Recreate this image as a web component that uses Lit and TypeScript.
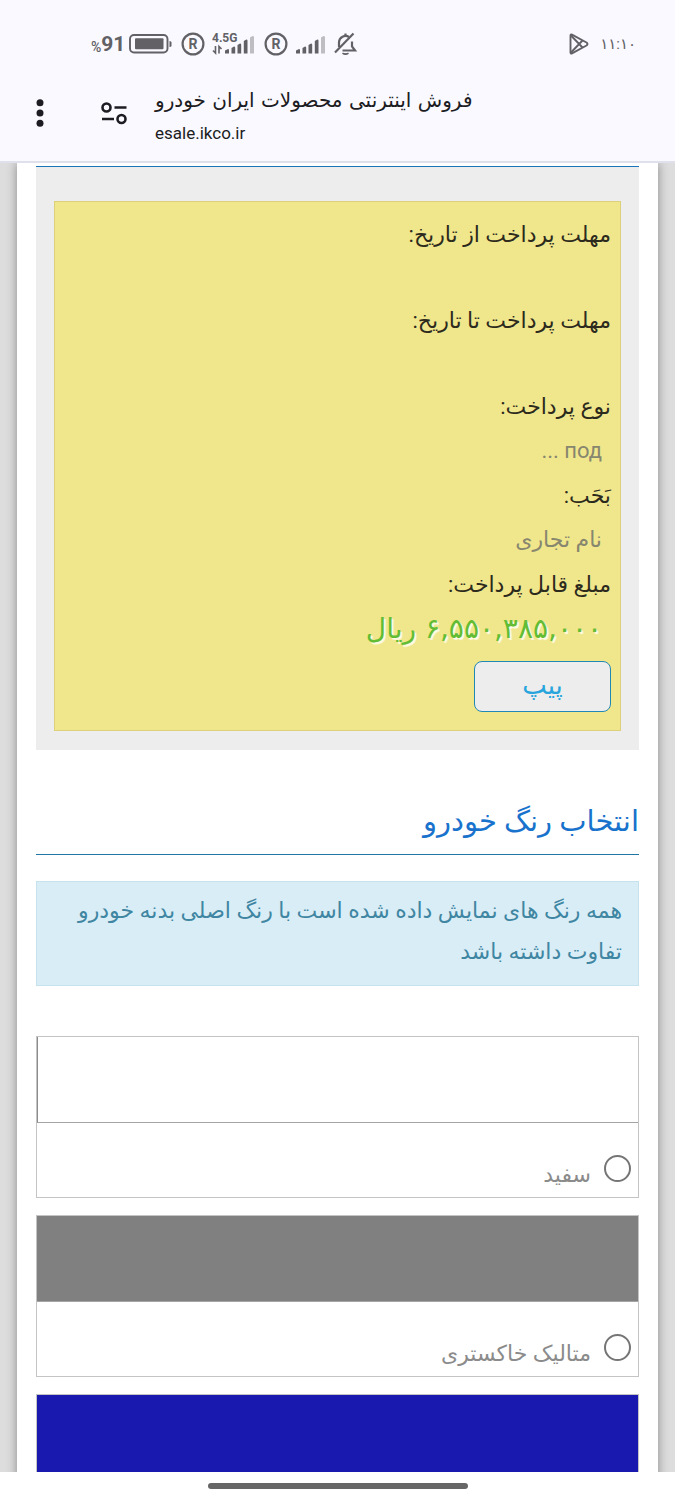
import { LitElement, html, svg, css, nothing } from "lit";
import { customElement, property } from "lit/decorators.js";

interface Field {
  label: string;
  value: string;
  price?: boolean;
}

interface Paint {
  id: string;
  name?: string;
  tone: string;
}

const FIELDS: Field[] = [
  { label: "مهلت پرداخت از تاریخ:", value: "" },
  { label: "مهلت پرداخت تا تاریخ:", value: "" },
  { label: "نوع پرداخت:", value: "под ..." },
  { label: "بَحَب:", value: "نام تجاری" },
  { label: "مبلغ قابل پرداخت:", value: "۶,۵۵۰,۳۸۵,۰۰۰ ریال", price: true },
];

const PAINTS: Paint[] = [
  { id: "white", name: "سفید", tone: "#ffffff" },
  { id: "grey", name: "متالیک خاکستری", tone: "#808080" },
  { id: "blue", tone: "#1919b0" },
];

@customElement("status-bar")
class StatusBar extends LitElement {
  static styles = css`
    :host {
      display: flex;
      align-items: center;
      height: 32px;
      padding: 28px 39px 0 91px;
      color: #616166;
      direction: ltr;
    }
    .percent {
      font: 500 14px/32px Roboto, sans-serif;
      padding-top: 6px;
    }
    .level {
      font: 700 21px/32px "Roboto", sans-serif;
    }
    .battery { margin: 0 9px 0 4px; }
    .reg { margin-right: 7px; }
    .net { margin-right: 9px; }
    .bars { margin: 0 8px 0 1px; }
    .play { margin-left: auto; }
    .time {
      font: 15px/32px Roboto, "DejaVu Sans", sans-serif;
      margin-left: 11px;
    }
    svg { display: block; flex: none; }
    .tiny { font: 700 12px "Roboto", sans-serif; }
    .mark { font: 700 14px "Roboto", sans-serif; }
  `;

  private registered() {
    return html`<svg class="reg" width="24" height="24" viewBox="0 0 24 24">
      <circle cx="12" cy="12" r="10.4" fill="none" stroke="currentColor" stroke-width="2.2" />
      <text class="mark" x="12" y="17" text-anchor="middle" fill="currentColor">R</text>
    </svg>`;
  }

  private bars() {
    return svg`
      <path fill="currentColor" d="M0 21.500v-3l3-1.500q1 0 1 1v3.500zM6.500 21.500v-5.500l2.500-1.500q1.200 0 1.200 1v6zM12.500 21.500V13l2.500-1.500q1.200 0 1.200 1v9zM18.800 21.500V9l2.500-1.500q1.200 0 1.200 1v13z" />
      <path fill="#bdbdc2" d="M25 21.500V5.500l2.500-1.500q1.500 0 1.500 1v16.500z" />`;
  }

  render() {
    return html`
      <span class="percent">%</span><span class="level">91</span>
      <svg class="battery" width="43" height="20" viewBox="0 0 43 20">
        <rect x="1" y="1" width="37.500" height="17.500" rx="4" fill="none" stroke="currentColor" stroke-width="1.900" />
        <rect x="6" y="4.300" width="28.500" height="11" rx="1" fill="currentColor" />
        <path d="M40.500 7q2 0 2 1.500v3q0 1.500-2 1.500z" fill="currentColor" />
      </svg>
      ${this.registered()}
      <svg class="net" width="43" height="24" viewBox="0 0 43 24">
        <text class="tiny" x="0" y="10" fill="currentColor">4.5G</text>
        <path d="M3.500 14v7L1 18.500M7 21.500v-7L9.500 17" fill="none" stroke="currentColor" stroke-width="1.600" />
        <g transform="translate(13 0)">${this.bars()}</g>
      </svg>
      ${this.registered()}
      <svg class="bars" width="30" height="24" viewBox="0 0 30 24">${this.bars()}</svg>
      <svg width="24" height="24" viewBox="0 0 24 24" fill="none" stroke="currentColor" stroke-width="2.200">
        <path d="M5 15V10a6.500 6.500 0 0 1 10-5" />
        <path d="M18 9.500V14.500L21 18.500H8.500" />
        <path d="M1 20.500 19.500 1.500" />
        <path d="M8.500 21.200q3 2.300 6 0" fill="currentColor" stroke-width="1.500" />
        <path d="M11.500 4V1.500" />
      </svg>
      <svg class="play" width="20" height="22" viewBox="0 0 20 22" fill="none" stroke="currentColor" stroke-width="1.900" stroke-linejoin="round">
        <path d="M1.500 2.500Q1.500 1 3 1.600L17.500 9.500Q19.500 11 17.500 12.500L3 20.400Q1.500 21 1.500 19.500z" />
        <path d="M2 2.500 13.500 14.500M2 19.500 13.500 7.500" />
      </svg>
      <span class="time">۱۱:۱۰</span>
    `;
  }
}

@customElement("browser-bar")
class BrowserBar extends LitElement {
  static styles = css`
    :host {
      display: flex;
      align-items: center;
      height: 103px;
      padding: 4px 27px 0;
      border-bottom: 2px solid #dfe0ec;
      box-sizing: border-box;
      direction: ltr;
      color: #1c1c22;
    }
    .icon {
      display: grid;
      place-items: center;
      width: 26px;
      height: 40px;
      padding: 0;
      border: 0;
      background: none;
      color: inherit;
    }
    .tune { margin: 0 28px 0 48px; }
    .heading { padding-top: 6px; }
    .title {
      font: 20px/34px "DejaVu Sans", sans-serif;
      direction: rtl;
    }
    .address {
      font: 17px/32px Roboto, sans-serif;
    }
  `;

  render() {
    return html`
      <button class="icon" aria-label="منو">
        <svg width="8" height="28" viewBox="0 0 8 28" fill="currentColor">
          <circle cx="4" cy="3.700" r="3.500" /><circle cx="4" cy="14" r="3.500" /><circle cx="4" cy="24.300" r="3.500" />
        </svg>
      </button>
      <button class="icon tune" aria-label="تنظیمات سایت">
        <svg width="26" height="24" viewBox="0 0 26 24" fill="none" stroke="currentColor" stroke-width="2.600">
          <circle cx="5.500" cy="6.500" r="4" /><path d="M13.500 6.500H25.500M1 18H13" /><circle cx="20.500" cy="18" r="4" />
        </svg>
      </button>
      <div class="heading">
        <div class="title">فروش اینترنتی محصولات ایران خودرو</div>
        <div class="address">esale.ikco.ir</div>
      </div>
    `;
  }
}

@customElement("payment-panel")
class PaymentPanel extends LitElement {
  static styles = css`
    :host {
      display: block;
      padding: 34px 18px 19px;
      background: #ededed;
      border-top: 1px solid #1a76b8;
    }
    .card {
      padding: 10px 9px 18px;
      background: #f0e68c;
      border: 1px solid #ddd07c;
    }
    .list { margin: 0; }
    .label {
      font-size: 22px;
      line-height: 45px;
      color: #2c2a1c;
    }
    .value {
      margin: 0;
      padding: 0 9px;
      min-height: 41px;
      font-size: 22px;
      line-height: 44px;
      color: #87866f;
    }
    .price {
      font-family: "DejaVu Sans", sans-serif;
      font-size: 28px;
      color: #62bd35;
      text-shadow: 2px 2px 1px #fdfbe6;
    }
    .submit {
      display: block;
      width: 137px;
      height: 51px;
      margin-top: 10px;
      padding: 0 0 4px;
      border: 1px solid #2088b5;
      border-radius: 8px;
      background: #ededed;
      color: #27a5dc;
      font: 26px/40px "DejaVu Sans", sans-serif;
    }
  `;

  render() {
    return html`<div class="card">
      <dl class="list">
        ${FIELDS.map(
          (f) => html`<dt class="label">${f.label}</dt>
            <dd class="value ${f.price ? "price" : ""}">${f.value || nothing}</dd>`
        )}
      </dl>
      <button class="submit">پیپ</button>
    </div>`;
  }
}

@customElement("paint-option")
class PaintOption extends LitElement {
  @property({ attribute: false }) paint!: Paint;

  static styles = css`
    :host {
      display: block;
      border: 1px solid #c4c4c4;
    }
    .swatch {
      height: 85px;
      border-bottom: 1px solid #a4a4a4;
    }
    .white { border-left: 1px solid #8c8c8c; }
    .choice {
      display: flex;
      align-items: flex-end;
      gap: 13px;
      height: 60px;
      padding: 0 7px 14px;
      font-size: 22px;
      line-height: 32px;
      color: #8b8b8b;
    }
    .radio {
      appearance: none;
      box-sizing: border-box;
      width: 27px;
      height: 27px;
      margin: 0 0 1px;
      border: 2px solid #757575;
      border-radius: 50%;
      background: #fff;
    }
    .radio:checked { background: radial-gradient(#1976d2 45%, #fff 50%); }
    .name { height: 24px; }
  `;

  render() {
    const { id, name, tone } = this.paint;
    return html`
      <div class="swatch ${id}" style="background:${tone}"></div>
      ${name
        ? html`<div class="choice">
            <input class="radio" type="radio" name="paint" id=${id} />
            <label class="name" for=${id}>${name}</label>
          </div>`
        : nothing}
    `;
  }
}

@customElement("app-root")
class AppRoot extends LitElement {
  static styles = css`
    :host {
      display: flex;
      flex-direction: column;
      height: 100vh;
      overflow: hidden;
      background: #fff;
      font-family: Roboto, "DejaVu Sans", sans-serif;
    }
    .top {
      flex: none;
      background: #f9f9ff;
    }
    .view {
      flex: 1;
      min-height: 0;
      overflow: hidden;
      padding: 0 17px;
      background: #dddddd;
      direction: rtl;
    }
    .page {
      padding: 3px 19px 40px;
      background: #fff;
      box-shadow: 0 0 10px #888;
    }
    .title {
      margin: 46px 0 26px;
      padding-bottom: 8px;
      border-bottom: 1px solid #2077a4;
      font-size: 29px;
      line-height: 50px;
      font-weight: 400;
      color: #1972cc;
    }
    .notice {
      margin: 0 0 50px;
      padding: 8px 16px 13px;
      border: 1px solid #c6e2ec;
      background: #d9edf7;
      color: #3f86a2;
      font-size: 22px;
      line-height: 41px;
    }
    .paints {
      display: grid;
      gap: 17px;
    }
    .gesture {
      flex: none;
      display: grid;
      place-items: center;
      height: 28px;
    }
    .pill {
      width: 260px;
      height: 6px;
      border-radius: 3px;
      background: #666;
    }
  `;

  render() {
    return html`
      <header class="top">
        <status-bar></status-bar>
        <browser-bar></browser-bar>
      </header>
      <main class="view" lang="fa">
        <div class="page">
          <payment-panel></payment-panel>
          <h2 class="title">انتخاب رنگ خودرو</h2>
          <p class="notice">همه رنگ های نمایش داده شده است با رنگ اصلی بدنه خودرو تفاوت داشته باشد</p>
          <div class="paints">
            ${PAINTS.map((p) => html`<paint-option .paint=${p}></paint-option>`)}
          </div>
        </div>
      </main>
      <footer class="gesture"><div class="pill"></div></footer>
    `;
  }
}
